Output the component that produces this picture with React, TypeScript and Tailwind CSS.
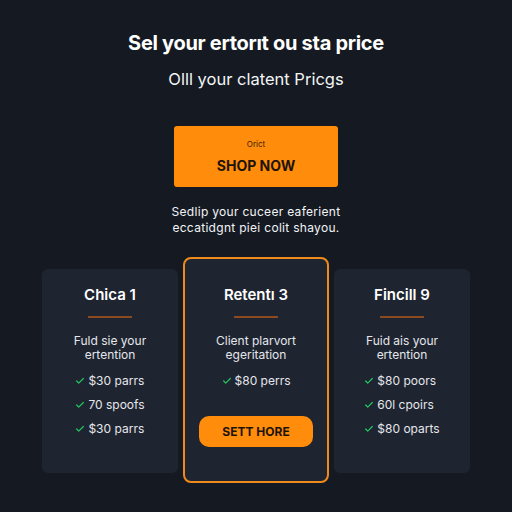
import { Check } from 'lucide-react';

const plans = [
  { name: 'Chica 1', desc: ['Fuld sie your', 'ertention'], items: ['$30 parrs', '70 spoofs', '$30 parrs'] },
  { name: 'Retentı 3', desc: ['Client plarvort', 'egeritation'], items: ['$80 perrs'], featured: true },
  { name: 'Fincill 9', desc: ['Fuid ais your', 'ertention'], items: ['$80 poors', '60l cpoirs', '$80 oparts'] },
];

export default function App() {
  return (
    <div className="w-[512px] h-[512px] bg-[#151a22] text-white flex flex-col items-center font-['Inter','Liberation_Sans',sans-serif]">
      {/* heading */}
      <h1 className="mt-[30px] text-[20px] font-bold tracking-[-0.3px] leading-[26px]">Sel your ertorıt ou sta price</h1>
      <p className="mt-[12px] text-[16.5px] text-gray-100 leading-[22px]">Olll your clatent Pricgs</p>

      {/* promo */}
      <div className="mt-[36px] w-[164px] h-[61px] bg-[#ff8c0a] rounded-[3px] flex flex-col items-center justify-center">
        <span className="text-[8px] text-[#3a2208] leading-[10px]">Orict</span>
        <span className="mt-[9px] text-[14px] font-bold text-[#1d1409] leading-[16px]">SHOP NOW</span>
      </div>
      <p className="mt-[17px] text-[12px] text-center text-gray-100 leading-[16px] tracking-[0.3px]">
        Sedlip your cuceer eaferient<br />eccatidgnt piei colit shayou.
      </p>

      {/* plans */}
      <div className="mt-[21px] flex items-start gap-[5px]">
        {plans.map((p) =>
          p.featured ? (
            <div key={p.name} className="w-[146px] h-[226px] rounded-[8px] border-2 border-[#f08a1c] bg-[#1e2430] flex flex-col items-center pt-[26px]">
              <h3 className="text-[15px] font-semibold leading-[20px]">{p.name}</h3>
              <div className="mt-[11px] w-[44px] h-[2px] bg-[#8c4a20]" />
              <p className="mt-[16px] text-[12px] text-center text-gray-200 leading-[14px]">{p.desc[0]}<br />{p.desc[1]}</p>
              <ul className="mt-[10px] flex flex-col gap-[6px] text-[12px] text-gray-200">
                {p.items.map((it, i) => (
                  <li key={i} className="flex items-center gap-[3px]"><Check size={10} strokeWidth={3} className="text-[#22c55e]" />{it}</li>
                ))}
              </ul>
              <button className="mt-[26px] w-[114px] h-[31px] rounded-[10px] bg-[#ff8c0a] text-[12px] font-bold text-[#1d1409]">SETT HORE</button>
            </div>
          ) : (
            <div key={p.name} className="mt-[12px] w-[136px] h-[204px] rounded-[6px] bg-[#1e2430] flex flex-col items-center pt-[16px]">
              <h3 className="text-[15px] font-semibold leading-[20px]">{p.name}</h3>
              <div className="mt-[11px] w-[44px] h-[2px] bg-[#8c4a20]" />
              <p className="mt-[16px] text-[12px] text-center text-gray-200 leading-[14px]">{p.desc[0]}<br />{p.desc[1]}</p>
              <ul className="mt-[10px] flex flex-col gap-[6px] text-[12px] text-gray-200">
                {p.items.map((it, i) => (
                  <li key={i} className="flex items-center gap-[3px]"><Check size={10} strokeWidth={3} className="text-[#22c55e]" />{it}</li>
                ))}
              </ul>
            </div>
          )
        )}
      </div>
    </div>
  );
}
